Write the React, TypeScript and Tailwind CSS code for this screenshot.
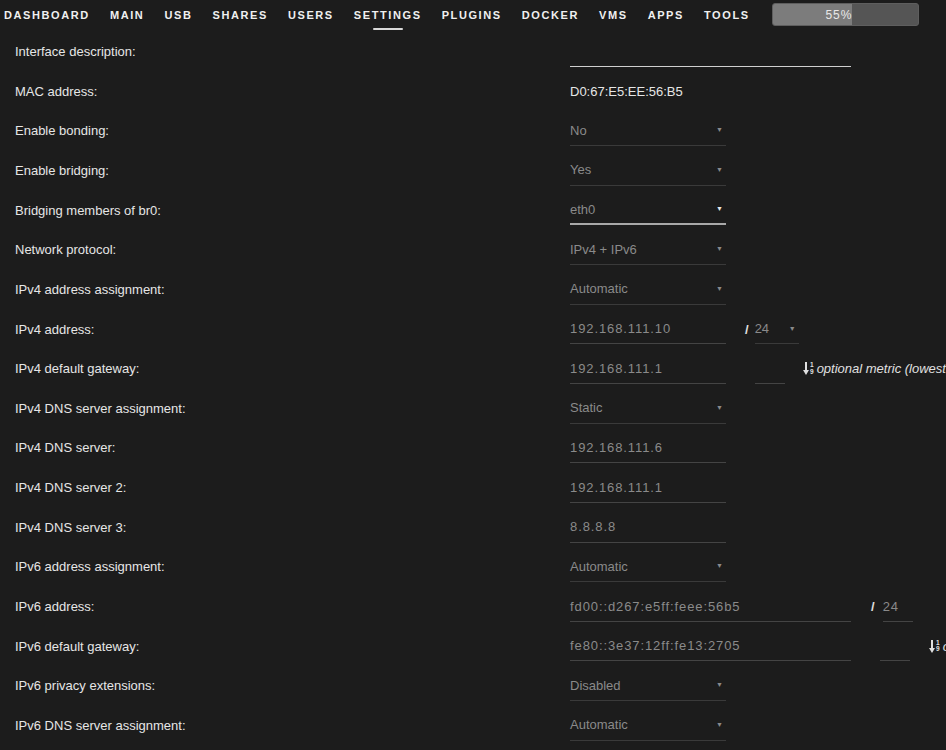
const navItems = [
  "Dashboard",
  "Main",
  "USB",
  "Shares",
  "Users",
  "Settings",
  "Plugins",
  "Docker",
  "VMs",
  "Apps",
  "Tools",
];

type Field =
  | { kind: "text"; value?: string; wide?: boolean; bright?: boolean }
  | { kind: "static"; value: string }
  | { kind: "select"; value: string; active?: boolean }
  | { kind: "ipv4"; value: string; mask: string }
  | { kind: "gw4"; value: string }
  | { kind: "ipv6"; value: string; mask: string }
  | { kind: "gw6"; value: string };

const rows: { label: string; field: Field }[] = [
  { label: "Interface description:", field: { kind: "text", wide: true, bright: true } },
  { label: "MAC address:", field: { kind: "static", value: "D0:67:E5:EE:56:B5" } },
  { label: "Enable bonding:", field: { kind: "select", value: "No" } },
  { label: "Enable bridging:", field: { kind: "select", value: "Yes" } },
  { label: "Bridging members of br0:", field: { kind: "select", value: "eth0", active: true } },
  { label: "Network protocol:", field: { kind: "select", value: "IPv4 + IPv6" } },
  { label: "IPv4 address assignment:", field: { kind: "select", value: "Automatic" } },
  { label: "IPv4 address:", field: { kind: "ipv4", value: "192.168.111.10", mask: "24" } },
  { label: "IPv4 default gateway:", field: { kind: "gw4", value: "192.168.111.1" } },
  { label: "IPv4 DNS server assignment:", field: { kind: "select", value: "Static" } },
  { label: "IPv4 DNS server:", field: { kind: "text", value: "192.168.111.6" } },
  { label: "IPv4 DNS server 2:", field: { kind: "text", value: "192.168.111.1" } },
  { label: "IPv4 DNS server 3:", field: { kind: "text", value: "8.8.8.8" } },
  { label: "IPv6 address assignment:", field: { kind: "select", value: "Automatic" } },
  { label: "IPv6 address:", field: { kind: "ipv6", value: "fd00::d267:e5ff:feee:56b5", mask: "24" } },
  { label: "IPv6 default gateway:", field: { kind: "gw6", value: "fe80::3e37:12ff:fe13:2705" } },
  { label: "IPv6 privacy extensions:", field: { kind: "select", value: "Disabled" } },
  { label: "IPv6 DNS server assignment:", field: { kind: "select", value: "Automatic" } },
];

function Select({ value, active, width = "w-[156px]" }: { value: string; active?: boolean; width?: string }) {
  return (
    <div
      className={`flex h-[30px] shrink-0 items-center justify-between ${width} ${
        active ? "border-b-2 border-[#a8a8a8]" : "border-b border-[#3a3a3a]"
      }`}
    >
      <span className="text-[#8a8a8a]">{value}</span>
      <span className={`pr-[3px] text-[7px] ${active ? "text-[#e8e8e8]" : "text-[#8a8a8a]"}`}>▼</span>
    </div>
  );
}

function Input({ value, width, bright }: { value?: string; width: string; bright?: boolean }) {
  return (
    <div
      className={`flex h-[30px] shrink-0 items-center ${width} border-b ${
        bright ? "border-[#cfcfcf]" : "border-[#444]"
      }`}
    >
      <span className="tracking-[0.9px] text-[#8a8a8a]">{value}</span>
    </div>
  );
}

// arrow down with 1 over 9, like the sort-numeric icon
function SortIcon() {
  return (
    <span className="flex shrink-0 items-center text-[#e0e0e0] not-italic">
      <svg width="6" height="13" viewBox="0 0 6 13" fill="currentColor">
        <rect x="2" y="0" width="2" height="9" />
        <path d="M0 8h6l-3 5z" />
      </svg>
      <span className="ml-[1px] flex flex-col text-[6.5px] font-bold leading-[6.5px]">
        <span>1</span>
        <span>9</span>
      </span>
    </span>
  );
}

function Metric() {
  return (
    <span className="flex shrink-0 items-center gap-[3px] italic text-[#e0e0e0]">
      <SortIcon />
      optional metric (lowest is preferred, 0 is default)
    </span>
  );
}

function FieldView({ field }: { field: Field }) {
  switch (field.kind) {
    case "text":
      return <Input value={field.value} width={field.wide ? "w-[281px]" : "w-[156px]"} bright={field.bright} />;
    case "static":
      return <span className="text-[#e6e6e6]">{field.value}</span>;
    case "select":
      return <Select value={field.value} active={field.active} />;
    case "ipv4":
      return (
        <div className="flex shrink-0 items-center">
          <Input value={field.value} width="w-[156px]" />
          <span className="ml-[19px] mr-[6px] font-bold text-[#e0e0e0]">/</span>
          <Select value={field.mask} width="w-[44px]" />
        </div>
      );
    case "gw4":
      return (
        <div className="flex shrink-0 items-center">
          <Input value={field.value} width="w-[156px]" />
          <div className="ml-[29px] mr-[18px] shrink-0">
            <Input width="w-[30px]" />
          </div>
          <Metric />
        </div>
      );
    case "ipv6":
      return (
        <div className="flex shrink-0 items-center">
          <Input value={field.value} width="w-[281px]" />
          <span className="ml-[20px] mr-[8px] font-bold text-[#e0e0e0]">/</span>
          <Input value={field.mask} width="w-[30px]" />
        </div>
      );
    case "gw6":
      return (
        <div className="flex shrink-0 items-center">
          <Input value={field.value} width="w-[281px]" />
          <div className="ml-[29px] mr-[19px] shrink-0">
            <Input width="w-[30px]" />
          </div>
          <Metric />
        </div>
      );
  }
}

export default function App() {
  return (
    <div
      className="h-[750px] w-[946px] overflow-hidden whitespace-nowrap bg-[#1c1c1c] text-[13px] text-[#e6e6e6]"
      style={{ fontFamily: '"Liberation Sans", Arial, sans-serif' }}
    >
      {/* top nav */}
      <div className="flex h-[32px] items-start pl-[4px]">
        <div className="flex h-[30px] items-center gap-[20px]">
          {navItems.map((item) => (
            <div key={item} className="relative flex h-full items-center">
              <span className="text-[11px] font-bold uppercase tracking-[1.6px] text-[#f0f0f0]">{item}</span>
              {item === "Settings" && (
                <span className="absolute bottom-0 left-1/2 h-[2px] w-[30px] -translate-x-1/2 rounded bg-[#d8d8d8]" />
              )}
            </div>
          ))}
        </div>
        <div className="ml-[22px] mt-[3px] flex h-[23px] w-[147px] overflow-hidden rounded-[3px] border border-[#5e5e5e] bg-[#555]">
          <div className="flex h-full w-[55%] items-center justify-end bg-[#7c7c7c] text-[12px] tracking-[1px] text-[#e8e8e8]">
            55%
          </div>
        </div>
      </div>

      {/* settings rows */}
      <div className="flex flex-col">
        {rows.map((row) => (
          <div key={row.label} className="flex h-[39.65px] items-center">
            <div className="w-[570px] shrink-0 pl-[15px] text-[#e6e6e6]">{row.label}</div>
            <FieldView field={row.field} />
          </div>
        ))}
      </div>
    </div>
  );
}
